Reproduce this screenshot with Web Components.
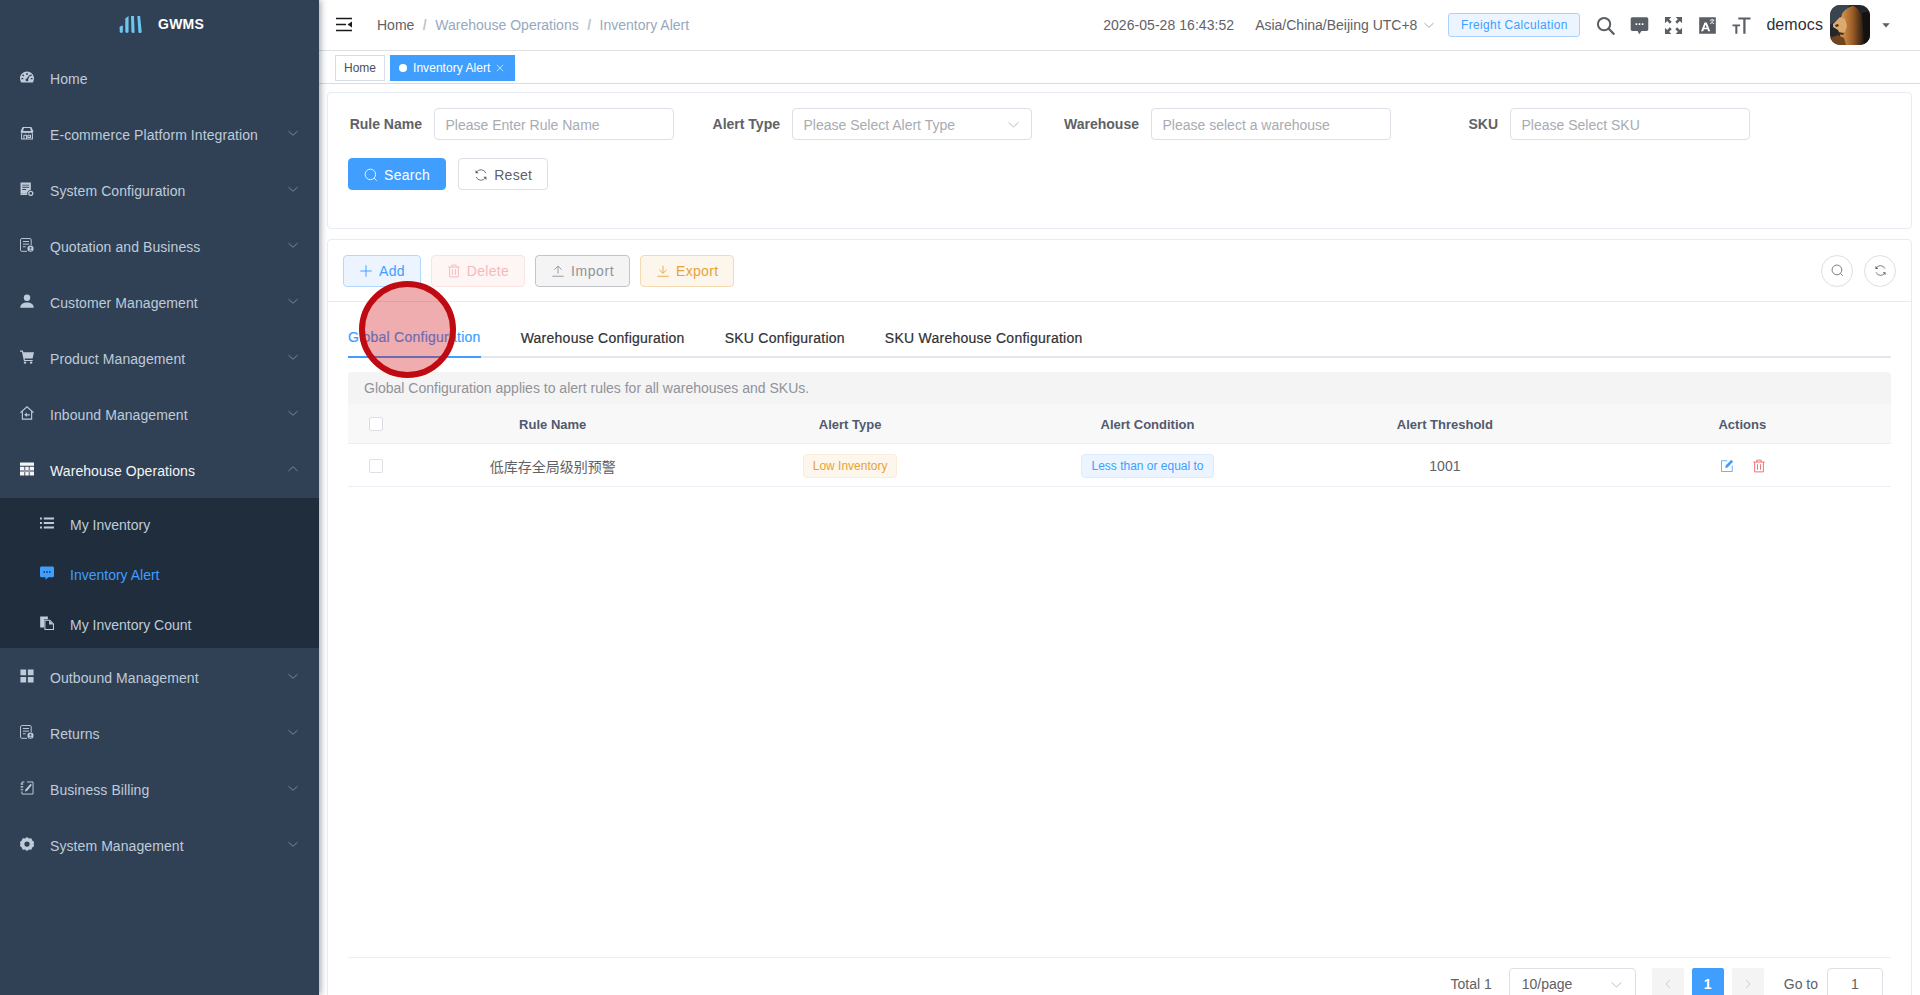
<!DOCTYPE html>
<html lang="en">
<head>
<meta charset="utf-8">
<title>GWMS - Inventory Alert</title>
<style>
  html, body { margin: 0; height: 100%; overflow: hidden; background: #fff; }
  body { font-family: "Liberation Sans", "Noto Sans CJK SC", sans-serif; font-size: 14px; color: #606266; }
</style>
</head>
<body>
<gwms-app>
  <gwms-sidebar slot="side">
    <gwms-menu-item icon="dashboard" plain>Home</gwms-menu-item>
    <gwms-menu-item icon="store">E-commerce Platform Integration</gwms-menu-item>
    <gwms-menu-item icon="sysconfig">System Configuration</gwms-menu-item>
    <gwms-menu-item icon="quotation">Quotation and Business</gwms-menu-item>
    <gwms-menu-item icon="user">Customer Management</gwms-menu-item>
    <gwms-menu-item icon="cart">Product Management</gwms-menu-item>
    <gwms-menu-item icon="inbound">Inbound Management</gwms-menu-item>
    <gwms-menu-item icon="warehouse" open>Warehouse Operations</gwms-menu-item>
    <gwms-submenu>
      <gwms-sub-item icon="list">My Inventory</gwms-sub-item>
      <gwms-sub-item icon="message" active>Inventory Alert</gwms-sub-item>
      <gwms-sub-item icon="count">My Inventory Count</gwms-sub-item>
    </gwms-submenu>
    <gwms-menu-item icon="outbound">Outbound Management</gwms-menu-item>
    <gwms-menu-item icon="quotation">Returns</gwms-menu-item>
    <gwms-menu-item icon="billing">Business Billing</gwms-menu-item>
    <gwms-menu-item icon="gear">System Management</gwms-menu-item>
  </gwms-sidebar>
  <gwms-navbar></gwms-navbar>
  <gwms-tags></gwms-tags>
  <gwms-search-card></gwms-search-card>
  <gwms-rules-card></gwms-rules-card>
</gwms-app>
<gwms-click-marker></gwms-click-marker>

<script>
(function () {
    // all icons live here, drawn on a 16 box with currentColor
    const ICONS = {
        dashboard: '<path fill="currentColor" fill-rule="evenodd" d="M8 1.800C3.600 1.800 0 5.400 0 9.800c0 1.600.5 3.100 1.300 4.400h13.400c.8-1.300 1.300-2.800 1.300-4.400 0-4.400-3.600-8-8-8zM7.200 3.400h1.600v2.200H7.200zM3.400 4.800l1.500 1.500-1.100 1.100-1.500-1.500zm9.200 0 1.100 1.100-1.500 1.500-1.100-1.100zM1.600 9h2.200v1.600H1.600zm10.600 0h2.200v1.600h-2.200zM10.600 5.600l.9.4-2.200 4.500a1.600 1.600 0 1 1-1.500-.8z"/>',
        store: '<path fill="currentColor" d="M3 1h10l2.200 4.600v.7c0 1.100-.9 1.900-2 1.900-.7 0-1.300-.3-1.700-.9-.3.6-1 .9-1.700.9s-1.400-.3-1.800-.9c-.4.6-1 .9-1.800.9s-1.400-.3-1.700-.9c-.4.6-1 .9-1.700.9-1.100 0-2-.8-2-1.900v-.7zM4.500 2.400l-1 3.200h9l-1-3.200z" fill-rule="evenodd"/><path fill="none" stroke="currentColor" stroke-width="1.200" d="M1.800 8.200v6.600h12.400V8.200M4.500 14.800v-4.200h3v4.200M9 10.600h3v2.400H9z"/>',
        sysconfig: '<path fill="currentColor" d="M.6.600h11.800v8.500a4.200 4.200 0 0 0-4.200 4.400H.6zm2 2.400v1h7.800V3zm0 2.500v1h7.800v-1zm0 2.500v1h4.400V8z" fill-rule="evenodd"/><path fill="currentColor" d="M.6 13.500h7.600c0 .5.100 1 .3 1.400H.6z"/><circle cx="12.300" cy="13" r="2.300" fill="none" stroke="currentColor" stroke-width="1.500"/>',
        quotation: '<path fill="none" stroke="currentColor" stroke-width="1.100" d="M8 15.200H2c-.8 0-1.400-.6-1.400-1.400V2c0-.8.600-1.400 1.400-1.400h9.400c.8 0 1.400.6 1.400 1.400v6"/><path stroke="currentColor" stroke-width="1.100" d="M3.300 4h7M3.300 7h7M3.300 10h3.200"/><circle cx="12" cy="12.200" r="3.500" fill="currentColor"/><circle cx="12" cy="11.300" r="1.100" fill="#304156"/><path fill="#304156" d="M10.200 14.200c.3-1.100 3.300-1.100 3.600 0z"/>',
        user: '<circle cx="8" cy="4.300" r="3.700" fill="currentColor"/><path fill="currentColor" d="M.3 15.200c0-3.400 3.500-5.600 7.700-5.600s7.700 2.200 7.700 5.600c0 .3-.2.5-.5.5H.8c-.3 0-.5-.2-.5-.5z"/>',
        cart: '<path fill="currentColor" d="M0 .6h3.300l.5 2h12.200l-1.600 7.100H5.300l.3 1.600h8.900v1.400H4.500L2.200 2H0z"/><circle cx="5.800" cy="14.400" r="1.400" fill="currentColor"/><circle cx="12.700" cy="14.400" r="1.400" fill="currentColor"/>',
        inbound: '<path fill="none" stroke="currentColor" stroke-width="1.300" d="M.5 7.500 8 1l7.500 6.500M2.700 6v9h10.600V6"/><path fill="currentColor" d="M4.800 10 7.800 7.500v1.800h3.400v1.500H7.800v1.700z"/>',
        warehouse: '<path fill="currentColor" fill-rule="evenodd" d="M0 .6h16v14.800H0zm0 3.700v1h16v-1zm5 1v10.100h1V5.300zm5 0v10.100h1V5.300zM0 9.800v1h16v-1z"/>',
        list: '<path fill="currentColor" d="M4.300 1.600h11.700v2.400H4.300zm0 5.200h11.700v2.400H4.300zm0 5.200h11.700v2.400H4.300zM0 1.600h2.200v2.400H0zm0 5.200h2.200v2.400H0zM0 12h2.200v2.400H0z"/>',
        message: '<path fill="currentColor" fill-rule="evenodd" d="M1.800.6h12.400c1 0 1.800.8 1.800 1.800v8.700c0 1-.8 1.800-1.800 1.800H9.600L6.300 15.800v-2.900H1.800c-1 0-1.800-.8-1.800-1.800V2.400C0 1.400.8.600 1.800.6zM4 6v1.700h1.700V6zm3.200 0v1.700h1.700V6zm3.100 0v1.700H12V6z"/>',
        count: '<path fill="currentColor" d="M.2.600h8.800v3.200H4.800v9.400H.2z"/><path fill="none" stroke="currentColor" stroke-width="1.200" d="M5.600 4.900h5.600l4.200 4.200v6.300H5.600z"/><path fill="currentColor" d="M10.400 5v4.800h4.800z"/>',
        outbound: '<path fill="currentColor" d="M.5.500h6.500v6.500H.5zm8.500 0h6.500v6.500H9zM.5 9h6.500v6.500H.5zM9 9h6.500v6.500H9z"/>',
        billing: '<path fill="none" stroke="currentColor" stroke-width="1.100" d="M8 1.100h6.900v13.800H2.200v-3M2.200 8.200V6M2.200 4.500V1.100H5M.6 10h3.200M.6 6.600h3.200M.6 3.400h3.200"/><path fill="currentColor" d="M12 3.200 13.600 4.700 8.200 11.200l-2.500 1.100.6-2.700z"/>',
        gear: '<path fill="currentColor" fill-rule="evenodd" d="m8 0 2.200 1.800 2.700-.3 1.100 2.500 2.200 1.600-.6 2.400.6 2.400-2.200 1.600-1.100 2.500-2.700-.3L8 16l-2.200-1.800-2.700.3L2 12 0 10.400.5 8 0 5.600 2 4l1.100-2.500 2.700.3zM8 5A3 3 0 1 0 8 11 3 3 0 0 0 8 5z"/>',
        chevron: '<path fill="none" stroke="currentColor" stroke-width="1" d="M2 5.500 8 11l6-5.500"/>',
        chevronup: '<path fill="none" stroke="currentColor" stroke-width="1" d="M2 10.500 8 5l6 5.500"/>',
        chevronleft: '<path fill="none" stroke="currentColor" stroke-width="1" d="M10.500 2.500 5.500 8l5 5.500"/>',
        chevronright: '<path fill="none" stroke="currentColor" stroke-width="1" d="M5.500 2.500 10.500 8l-5 5.500"/>',
        search: '<circle cx="7.300" cy="7.300" r="6" fill="none" stroke="currentColor" stroke-width="1"/><path stroke="currentColor" stroke-width="1" d="m11.700 11.700 2.800 2.800"/>',
        refresh: '<path fill="none" stroke="currentColor" stroke-width="1" d="M13.500 5.800A6 6 0 0 0 2.700 5M2.500 10.200A6 6 0 0 0 13.300 11"/><path fill="currentColor" d="M1.800 2.300 5.300 6H1.800zM14.200 13.700 10.700 10h3.500z"/>',
        plus: '<path stroke="currentColor" stroke-width="1.100" d="M8 1.500v13M1.500 8h13"/>',
        trash: '<path fill="none" stroke="currentColor" stroke-width="1.100" d="M1.500 3.500h13M5.500 3.500V1.300h5v2.200M3 3.500v11.200h10V3.500M6.300 6v6.300M9.700 6v6.300"/>',
        upload: '<path fill="none" stroke="currentColor" stroke-width="1" d="M1.500 14h13M8 11V2.500M3.800 6.500 8 2.300l4.200 4.200"/>',
        download: '<path fill="none" stroke="currentColor" stroke-width="1" d="M1.500 14h13M8 2v8.500M3.800 6.500 8 10.700l4.200-4.200"/>',
        edit: '<path fill="none" stroke="currentColor" stroke-width=".9" d="M8.500 2H1.700v12.300H14V7.500"/><path fill="currentColor" d="M12.800.8 15 3 8.600 9.600l-2.700.6.600-2.800z"/>',
        close: '<path stroke="currentColor" stroke-width="1" d="m3 3 10 10M13 3 3 13"/>',
        hamburger: '<path stroke="currentColor" stroke-width="1.600" d="M0 1.500h16M0 7.500h10M0 13.500h16"/><path fill="currentColor" d="M16 4.500v6l-4.500-3z"/>',
        bigsearch: '<circle cx="6.800" cy="6.800" r="5.200" fill="none" stroke="currentColor" stroke-width="1.700"/><path stroke="currentColor" stroke-width="1.900" stroke-linecap="round" d="m10.800 10.800 4 4.200"/>',
        bubble: '<path fill="currentColor" fill-rule="evenodd" d="M2 1h12c.8 0 1.400.6 1.400 1.400v8.800c0 .8-.6 1.400-1.400 1.400H9.700L7.800 15.300 6.400 12.600H2c-.8 0-1.400-.6-1.400-1.400V2.400C.6 1.600 1.200 1 2 1zm2.700 5.200v1.400h1.400V6.200zm2.600 0v1.400h1.400V6.200zm2.600 0v1.400h1.400V6.200z"/>',
        fullscreen: '<path fill="currentColor" d="M.8.800h5.400L4.300 2.700l2.200 2.200-1.600 1.600-2.200-2.200L.8 6.200zM15.200.800v5.400l-1.900-1.900-2.200 2.200-1.600-1.600 2.200-2.200L9.800.800zM.8 15.200V9.800l1.900 1.900 2.200-2.200 1.600 1.600-2.200 2.200 1.900 1.900zM15.200 15.200H9.800l1.900-1.900-2.200-2.200 1.600-1.600 2.200 2.200 1.900-1.900z"/>',
        translate: '<path fill="currentColor" fill-rule="evenodd" d="M1.400 1h13.200c.4 0 .4 0 .4.400v13.200c0 .4 0 .4-.4.400H1.400c-.4 0-.4 0-.4-.4V1.400c0-.4 0-.4.400-.4zM5.500 5.500 2.600 12.800h1.800l.6-1.700h2.900l.6 1.700h1.800L7.400 5.500zm.9 1.900 1 2.400H5.400z"/><path stroke="#fff" stroke-width=".7" fill="none" d="M10 3.400h3.800M11.900 2.500v.9M13 3.400c-.3 1.400-1.300 2.500-2.800 3.100M10.900 4.500c.5.900 1.400 1.600 2.700 2"/>',
        fontsize: '<path fill="currentColor" d="M5.300 1.200H15.600v1.700h-4.200v12H9.500V2.900H5.300zM.4 7.200h6.400v1.500H4.500v6.200H2.800V8.700H.4z"/>',
        caret: '<path fill="currentColor" d="M2 5h12L8 12z"/>'
    };

    class GwmsIcon extends HTMLElement {
        constructor() {
            super();
            this.attachShadow({ mode: 'open' });
        }

        connectedCallback() {
            const size = this.getAttribute('size') || 14;
            const name = this.getAttribute('name');
            this.shadowRoot.innerHTML = `
      <style>
        :host { display: inline-flex; width: ${size}px; height: ${size}px; flex: none; }
        svg { width: 100%; height: 100%; display: block; }
      </style>
      <svg viewBox="0 0 16 16" xmlns="http://www.w3.org/2000/svg">${ICONS[name] || ''}</svg>
    `;
        }
    }

    class GwmsApp extends HTMLElement {
        constructor() {
            super();
            this.attachShadow({ mode: 'open' });
            this.shadowRoot.innerHTML = `
      <style>
        :host { display: flex; height: 995px; overflow: hidden; }
        .main { flex: 1; min-width: 0; display: flex; flex-direction: column; height: 995px; overflow: hidden; }
      </style>
      <slot name="side"></slot>
      <div class="main"><slot></slot></div>
    `;
        }
    }

    class GwmsSidebar extends HTMLElement {
        constructor() {
            super();
            this.attachShadow({ mode: 'open' });
            this.shadowRoot.innerHTML = `
      <style>
        :host {
          display: block; width: 319px; flex: none; height: 995px; background: #304156;
          box-shadow: 2px 0 6px rgba(0, 21, 41, .35); position: relative; z-index: 2;
        }
        .logo { height: 50px; display: flex; align-items: center; justify-content: center; gap: 15px; padding-left: 4px; box-sizing: border-box; }
        .logo b { color: #fff; font-size: 14px; font-weight: 700; letter-spacing: .2px; position: relative; top: -1px; }
        .logo svg { width: 24px; height: 18px; position: relative; top: -1px; }
      </style>
      <div class="logo">
        <svg viewBox="0 0 22 17" xmlns="http://www.w3.org/2000/svg" fill="#6cc6ee">
          <path d="M.3 11.500c.6-1 1.800-1.400 3-1.700v5.800c0 .8-.6 1.400-1.500 1.400-.9 0-1.500-.6-1.500-1.400z"/>
          <path d="M5.600 3.200 8.700.9v14.800c0 .7-.6 1.300-1.500 1.300s-1.600-.6-1.600-1.300z"/>
          <path d="M11 1h2.800l.6 15c0 .6-.5 1-1.300 1-1 0-1.700-.4-1.700-1.100z"/>
          <path d="M17 1h2.600l1.500 14.800c0 .7-.6 1.200-1.400 1.200-1 0-1.700-.5-1.700-1.200z"/>
        </svg>
        <b>GWMS</b>
      </div>
      <slot></slot>
    `;
        }
    }

    class GwmsMenuItem extends HTMLElement {
        constructor() {
            super();
            this.attachShadow({ mode: 'open' });
            const open = this.hasAttribute('open');
            const arrow = this.hasAttribute('plain') ? '' :
                `<gwms-icon class="arrow" name="${open ? 'chevronup' : 'chevron'}" size="12"></gwms-icon>`;
            this.shadowRoot.innerHTML = `
      <style>
        :host {
          display: flex; align-items: center; height: 56px; padding: 0 20px; color: ${open ? '#f4f4f5' : '#bfcbd9'};
          font-size: 14px; box-sizing: border-box; letter-spacing: .08px;
        }
        .icon { margin-right: 16px; color: ${open ? '#f4f4f5' : '#bfcbd9'}; position: relative; top: -1px; }
        .label { flex: 1; position: relative; top: 1px; white-space: nowrap; }
        .arrow { position: relative; top: -1px; color: #909fb2; }
      </style>
      <gwms-icon class="icon" name="${this.getAttribute('icon')}" size="14"></gwms-icon>
      <span class="label"><slot></slot></span>
      ${arrow}
    `;
        }
    }

    class GwmsSubmenu extends HTMLElement {
        constructor() {
            super();
            this.attachShadow({ mode: 'open' });
            this.shadowRoot.innerHTML = `
      <style>:host { display: block; background: #1f2d3d; height: 150px; margin-bottom: 1px; }</style>
      <slot></slot>
    `;
        }
    }

    class GwmsSubItem extends HTMLElement {
        constructor() {
            super();
            this.attachShadow({ mode: 'open' });
            const color = this.hasAttribute('active') ? '#409eff' : '#bfcbd9';
            this.shadowRoot.innerHTML = `
      <style>
        :host {
          display: flex; align-items: center; height: 50px; padding-left: 40px; color: ${color};
          font-size: 14px; box-sizing: border-box;
        }
        .icon { margin-right: 16px; position: relative; top: 0; }
        .label { position: relative; top: 2px; }
      </style>
      <gwms-icon class="icon" name="${this.getAttribute('icon')}" size="14"></gwms-icon>
      <span class="label"><slot></slot></span>
    `;
        }
    }

    class GwmsNavbar extends HTMLElement {
        constructor() {
            super();
            this.attachShadow({ mode: 'open' });
            this.shadowRoot.innerHTML = `
      <style>
        :host {
          display: flex; align-items: center; height: 51px; flex: none; box-sizing: border-box;
          border-bottom: 1px solid #dfe1e5; padding: 0 29px 0 17px; color: #606266; font-size: 14px;
        }
        .ham { color: #1a1a1a; }
        .crumbs { display: flex; align-items: center; margin-left: 25px; white-space: nowrap; color: #97a8be; }
        .crumbs .first { color: #606266; }
        .crumbs i { font-style: normal; font-weight: 700; color: #c0c4cc; margin: 0 8.500px; }
        .right { margin-left: auto; display: flex; align-items: center; white-space: nowrap; }
        .date { letter-spacing: .05px; }
        .tz { margin-left: 21px; display: flex; align-items: center; gap: 6px; }
        .tz gwms-icon { color: #8a8d94; }
        .freight {
          margin-left: 13px; height: 24px; width: 132px; box-sizing: border-box; display: flex; align-items: center;
          justify-content: center; background: #ecf5ff; border: 1px solid #a8d3ff; border-radius: 3px;
          color: #409eff; font-size: 12px; letter-spacing: .35px;
        }
        .tool { color: #5a5e66; }
        .who { margin-left: 15px; color: #303133; font-size: 16px; letter-spacing: .1px; }
        .avatar { margin-left: 7px; width: 40px; height: 40px; border-radius: 10px; overflow: hidden; display: block; }
        .avatar svg { display: block; }
        .caret { margin-left: 11px; color: #5a5e66; }
      </style>
      <gwms-icon class="ham" name="hamburger" size="16"></gwms-icon>
      <div class="crumbs">
        <span class="first">Home</span><i>/</i><span>Warehouse Operations</span><i>/</i><span>Inventory Alert</span>
      </div>
      <div class="right">
        <span class="date">2026-05-28 16:43:52</span>
        <span class="tz">Asia/China/Beijing UTC+8 <gwms-icon name="chevron" size="12"></gwms-icon></span>
        <span class="freight">Freight Calculation</span>
        <gwms-icon class="tool" style="margin-left:16px" name="bigsearch" size="19"></gwms-icon>
        <gwms-icon class="tool" style="margin-left:15px" name="bubble" size="19"></gwms-icon>
        <gwms-icon class="tool" style="margin-left:15px" name="fullscreen" size="19"></gwms-icon>
        <gwms-icon class="tool" style="margin-left:15px" name="translate" size="19"></gwms-icon>
        <gwms-icon class="tool" style="margin-left:15px" name="fontsize" size="19"></gwms-icon>
        <span class="who">democs</span>
        <span class="avatar">
          <svg width="40" height="40" viewBox="0 0 40 40" xmlns="http://www.w3.org/2000/svg">
            <defs>
              <linearGradient id="mane" x1="0" y1="0" x2="1" y2="0">
                <stop offset="0" stop-color="#e0a356"/>
                <stop offset=".55" stop-color="#9a5c26"/>
                <stop offset="1" stop-color="#231811"/>
              </linearGradient>
            </defs>
            <rect width="40" height="40" fill="#24262b"/>
            <path fill="#3b4552" d="M0 0h20L8 14 0 20z"/>
            <path fill="url(#mane)" d="M23 1c4 1 8 6 9 13l2 26H12l-2-8 1-8-2-6 3-9c2-4 8-8 11-8z"/>
            <path fill="#dcaa70" d="M3 19l7-7 5 2 2 7-2 6-5 2-2-4-5-3z"/>
            <path fill="#4a2c14" d="M5 20l3-1 1 2-3 1zM8 27l6 1-1 2-5-1z"/>
            <path fill="#6f4420" d="M0 33l8-3 6 3 2 7H0z"/>
            <path fill="#141110" d="M32 8l8-2v34h-6z"/>
          </svg>
        </span>
        <gwms-icon class="caret" name="caret" size="10"></gwms-icon>
      </div>
    `;
        }
    }

    class GwmsTags extends HTMLElement {
        constructor() {
            super();
            this.attachShadow({ mode: 'open' });
            this.shadowRoot.innerHTML = `
      <style>
        :host {
          display: flex; align-items: center; gap: 5px; height: 33px; flex: none; box-sizing: border-box;
          border-bottom: 1px solid #d8dce5; padding: 1px 0 0 16px; font-size: 12px;
        }
        .tag {
          height: 26px; box-sizing: border-box; display: flex; align-items: center; border: 1px solid #d8dce5;
          color: #495060; padding: 0 8px; background: #fff;
        }
        .on { background: #409eff; border-color: #409eff; color: #fff; gap: 5px; padding-right: 9px; letter-spacing: .05px; }
        .dot { width: 8px; height: 8px; background: #fff; border-radius: 50%; margin-right: 1px; }
        .on gwms-icon { margin-top: 1px; }
      </style>
      <span class="tag">Home</span>
      <span class="tag on"><span class="dot"></span>Inventory Alert <gwms-icon name="close" size="10"></gwms-icon></span>
    `;
        }
    }

    class GwmsButton extends HTMLElement {
        constructor() {
            super();
            this.attachShadow({ mode: 'open' });
            const kinds = {
                primary: 'background:#409eff;border-color:#409eff;color:#fff',
                plain: 'background:#fff;border-color:#dcdfe6;color:#606266',
                add: 'background:#ecf5ff;border-color:#b3d8ff;color:#409eff',
                remove: 'background:#fef5f5;border-color:#fde2e2;color:#f9b8b8',
                neutral: 'background:#f4f4f5;border-color:#c2c4c9;color:#909399;letter-spacing:.55px',
                warn: 'background:#fdf6ec;border-color:#f5dab1;color:#e6a23c'
            };
            this.shadowRoot.innerHTML = `
      <style>
        :host {
          display: inline-flex; align-items: center; height: 32px; box-sizing: border-box; padding: 0 15px;
          border: 1px solid; border-radius: 4px; font-size: 14px; gap: 6px; white-space: nowrap; letter-spacing: .3px;
          ${kinds[this.getAttribute('kind')]}
        }
      </style>
      <gwms-icon name="${this.getAttribute('icon')}" size="14"></gwms-icon>
      <slot></slot>
    `;
        }
    }

    class GwmsField extends HTMLElement {
        constructor() {
            super();
            this.attachShadow({ mode: 'open' });
            const labelWidth = this.getAttribute('label-width');
            const arrow = this.hasAttribute('select') ?
                '<gwms-icon class="arrow" name="chevron" size="13"></gwms-icon>' : '';
            this.shadowRoot.innerHTML = `
      <style>
        :host { display: flex; align-items: center; height: 32px; }
        label {
          display: flex; justify-content: flex-end; width: ${labelWidth}px; box-sizing: border-box; padding-right: 12px;
          font-weight: 700; color: #606266; font-size: 14px; white-space: nowrap; flex: none;
        }
        .box {
          width: 240px; height: 32px; box-sizing: border-box; border: 1px solid #dcdfe6; border-radius: 4px;
          display: flex; align-items: center; justify-content: space-between; padding: 1px 11px 0 10.500px;
          color: #a8abb2; font-size: 14px; white-space: nowrap;
        }
        .arrow { color: #a8abb2; }
      </style>
      <label>${this.getAttribute('label')}</label>
      <div class="box"><span>${this.getAttribute('placeholder')}</span>${arrow}</div>
    `;
        }
    }

    class GwmsSearchCard extends HTMLElement {
        constructor() {
            super();
            this.attachShadow({ mode: 'open' });
            this.shadowRoot.innerHTML = `
      <style>
        :host {
          display: block; flex: none; height: 137px; box-sizing: border-box; margin: 8px 8px 10px;
          border: 1px solid #e6ebf5; border-radius: 4px; padding: 15px 20px; background: #fff;
        }
        .row { display: flex; gap: 40px; }
        .actions { display: flex; gap: 12px; margin-top: 18px; }
        .actions gwms-button { padding-top: 1px; }
      </style>
      <div class="row">
        <gwms-field label="Rule Name" label-width="86" placeholder="Please Enter Rule Name"></gwms-field>
        <gwms-field label="Alert Type" label-width="78" placeholder="Please Select Alert Type" select></gwms-field>
        <gwms-field label="Warehouse" label-width="79" placeholder="Please select a warehouse"></gwms-field>
        <gwms-field label="SKU" label-width="79" placeholder="Please Select SKU"></gwms-field>
      </div>
      <div class="actions">
        <gwms-button kind="primary" icon="search">Search</gwms-button>
        <gwms-button kind="plain" icon="refresh">Reset</gwms-button>
      </div>
    `;
        }
    }

    class GwmsRulesCard extends HTMLElement {
        constructor() {
            super();
            this.attachShadow({ mode: 'open' });
            this.shadowRoot.innerHTML = `
      <style>
        :host {
          display: block; flex: none; margin: 0 8px; border: 1px solid #e6ebf5; border-radius: 4px; background: #fff;
        }
        .toolbar {
          display: flex; align-items: center; gap: 10px; height: 62px; box-sizing: border-box; padding: 0 15px;
          border-bottom: 1px solid #e6ebf5;
        }
        .round {
          width: 32px; height: 32px; box-sizing: border-box; border: 1px solid #dcdfe6; border-radius: 50%;
          display: flex; align-items: center; justify-content: center; color: #606266;
        }
        .push { margin-left: auto; }
        .round + .round { margin-left: 1px; }
        .panel { padding: 16px 20px 0; }
        .body { height: 642px; display: flex; flex-direction: column; }
        .grow { flex: 1; }
      </style>
      <div class="toolbar">
        <gwms-button kind="add" icon="plus">Add</gwms-button>
        <gwms-button kind="remove" icon="trash">Delete</gwms-button>
        <gwms-button kind="neutral" icon="upload">Import</gwms-button>
        <gwms-button kind="warn" icon="download">Export</gwms-button>
        <span class="round push"><gwms-icon name="search" size="13"></gwms-icon></span>
        <span class="round"><gwms-icon name="refresh" size="13"></gwms-icon></span>
      </div>
      <div class="panel">
        <gwms-tabs></gwms-tabs>
        <div class="body">
          <gwms-notice>Global Configuration applies to alert rules for all warehouses and SKUs.</gwms-notice>
          <gwms-rule-table></gwms-rule-table>
          <div class="grow"></div>
          <gwms-pager></gwms-pager>
        </div>
      </div>
    `;
        }
    }

    class GwmsTabs extends HTMLElement {
        constructor() {
            super();
            this.attachShadow({ mode: 'open' });
            this.shadowRoot.innerHTML = `
      <style>
        :host {
          display: flex; height: 40px; box-sizing: border-box; border-bottom: 2px solid #e4e7ed; font-size: 14px;
          color: #303133; letter-spacing: .25px; -webkit-text-stroke: .2px currentColor;
        }
        span { display: flex; align-items: center; height: 40px; box-sizing: border-box; padding: 0 20px; white-space: nowrap; }
        .on { padding: 0; margin-right: 20px; color: #409eff; border-bottom: 2px solid #409eff; }
        span:last-child { padding-right: 0; }
      </style>
      <span class="on">Global Configuration</span>
      <span>Warehouse Configuration</span>
      <span>SKU Configuration</span>
      <span>SKU Warehouse Configuration</span>
    `;
        }
    }

    class GwmsNotice extends HTMLElement {
        constructor() {
            super();
            this.attachShadow({ mode: 'open' });
            this.shadowRoot.innerHTML = `
      <style>
        :host {
          display: flex; align-items: center; flex: none; height: 32px; margin-top: 14px; padding-left: 16px;
          background: #f4f4f5; border-radius: 4px 4px 0 0; color: #909399; font-size: 14px;
        }
      </style>
      <slot></slot>
    `;
        }
    }

    class GwmsRuleTable extends HTMLElement {
        constructor() {
            super();
            this.attachShadow({ mode: 'open' });
            this.shadowRoot.innerHTML = `
      <style>
        :host { display: block; flex: none; font-size: 14px; color: #606266; }
        .row { display: grid; grid-template-columns: 56px repeat(5, 1fr); align-items: center; text-align: center; box-sizing: border-box; border-bottom: 1px solid #ebeef5; }
        .head { height: 40px; background: #f8f8f9; color: #515a6e; font-weight: 700; font-size: 13px; padding-top: 2px; }
        .data { height: 43px; padding-top: 1px; }
        .check { display: block; width: 14px; height: 14px; box-sizing: border-box; border: 1px solid #dcdfe6; border-radius: 2px; background: #fff; margin: 0 auto; }
        .head .check { margin-top: -2px; }
        .tag { display: inline-flex; align-items: center; height: 24px; box-sizing: border-box; padding: 0 9px; border: 1px solid; border-radius: 4px; font-size: 12px; }
        .warn { background: #fdf6ec; border-color: #faecd8; color: #e6a23c; }
        .info { background: #ecf5ff; border-color: #d9ecff; color: #409eff; }
        .ops { display: flex; justify-content: center; gap: 18px; padding-left: 2px; }
      </style>
      <div class="row head">
        <span><i class="check"></i></span>
        <span>Rule Name</span><span>Alert Type</span><span>Alert Condition</span><span>Alert Threshold</span><span>Actions</span>
      </div>
      <div class="row data">
        <span><i class="check"></i></span>
        <span>低库存全局级别预警</span>
        <span><span class="tag warn">Low Inventory</span></span>
        <span><span class="tag info">Less than or equal to</span></span>
        <span>1001</span>
        <span class="ops">
          <gwms-icon name="edit" size="14" style="color:#409eff"></gwms-icon>
          <gwms-icon name="trash" size="14" style="color:#f56c6c"></gwms-icon>
        </span>
      </div>
    `;
        }
    }

    class GwmsPager extends HTMLElement {
        constructor() {
            super();
            this.attachShadow({ mode: 'open' });
            this.shadowRoot.innerHTML = `
      <style>
        :host {
          display: flex; align-items: flex-start; justify-content: flex-end; flex: none; height: 43px; box-sizing: border-box;
          border-top: 1px solid #ebeef5; padding: 10px 8px 0 0; font-size: 14px; color: #606266; white-space: nowrap;
        }
        .text { height: 32px; display: flex; align-items: center; }
        .select {
          margin-left: 17px; width: 127px; height: 32px; box-sizing: border-box; border: 1px solid #dcdfe6; border-radius: 4px;
          display: flex; align-items: center; justify-content: space-between; padding: 0 12px; color: #606266;
        }
        .select gwms-icon { color: #a8abb2; }
        .btn {
          width: 32px; height: 32px; box-sizing: border-box; display: flex; align-items: center; justify-content: center;
          background: #f4f4f5; border-radius: 2px; color: #c0c4cc; margin-left: 8px;
        }
        .btn.on { background: #409eff; color: #fff; font-weight: 700; }
        .goto {
          margin-left: 9px; width: 56px; height: 32px; box-sizing: border-box; border: 1px solid #dcdfe6; border-radius: 4px;
          display: flex; align-items: center; justify-content: center;
        }
      </style>
      <span class="text">Total 1</span>
      <span class="select">10/page <gwms-icon name="chevron" size="13"></gwms-icon></span>
      <span class="btn" style="margin-left:16px"><gwms-icon name="chevronleft" size="12"></gwms-icon></span>
      <span class="btn on">1</span>
      <span class="btn"><gwms-icon name="chevronright" size="12"></gwms-icon></span>
      <span class="text" style="margin-left:20px">Go to</span>
      <span class="goto">1</span>
    `;
        }
    }

    // the red click highlight that sits over the page
    class GwmsClickMarker extends HTMLElement {
        constructor() {
            super();
            this.attachShadow({ mode: 'open' });
            this.shadowRoot.innerHTML = `
      <style>
        :host {
          position: absolute; left: 359px; top: 281px; width: 97px; height: 97px; box-sizing: border-box;
          border: 6px solid #c00a12; border-radius: 50%; background: rgba(204, 0, 10, .32); z-index: 10;
        }
      </style>
    `;
        }
    }

    customElements.define('gwms-icon', GwmsIcon);
    customElements.define('gwms-app', GwmsApp);
    customElements.define('gwms-sidebar', GwmsSidebar);
    customElements.define('gwms-menu-item', GwmsMenuItem);
    customElements.define('gwms-submenu', GwmsSubmenu);
    customElements.define('gwms-sub-item', GwmsSubItem);
    customElements.define('gwms-navbar', GwmsNavbar);
    customElements.define('gwms-tags', GwmsTags);
    customElements.define('gwms-button', GwmsButton);
    customElements.define('gwms-field', GwmsField);
    customElements.define('gwms-search-card', GwmsSearchCard);
    customElements.define('gwms-rules-card', GwmsRulesCard);
    customElements.define('gwms-tabs', GwmsTabs);
    customElements.define('gwms-notice', GwmsNotice);
    customElements.define('gwms-rule-table', GwmsRuleTable);
    customElements.define('gwms-pager', GwmsPager);
    customElements.define('gwms-click-marker', GwmsClickMarker);
})();
</script>
</body>
</html>
